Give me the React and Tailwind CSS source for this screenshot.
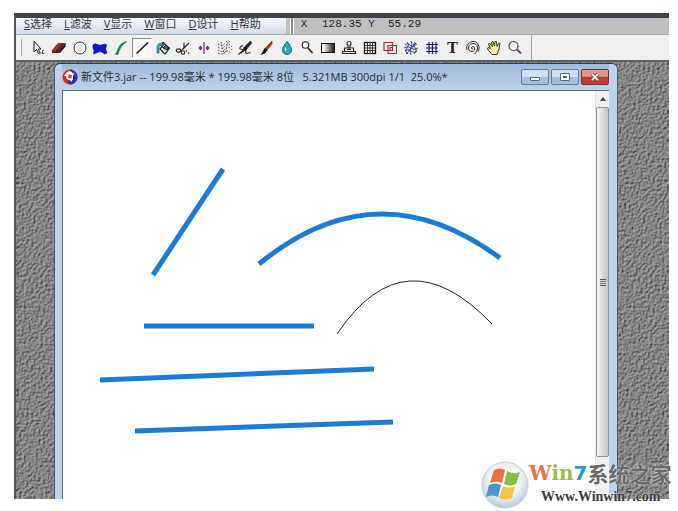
import React from "react";

const menus = [
  { key: "S", label: "选择" },
  { key: "L", label: "滤波" },
  { key: "V", label: "显示" },
  { key: "W", label: "窗口" },
  { key: "D", label: "设计" },
  { key: "H", label: "帮助" },
];

const tools = [
  {
    name: "Select",
    icon: (
      <>
        <path d="M4 1v11l2.500-2.500L8.500 13.500l1.500-.7-1.800-3.800H11z" fill="#fff" stroke="#222" />
        <path d="M9.500 13h2m1-2.500l1.500-.5m-1.500 .5v3h2" stroke="#222" fill="none" strokeWidth=".8" />
      </>
    ),
  },
  {
    name: "Eraser",
    icon: (
      <>
        <path d="M1 10.500L7 3.500h7.500L9 10.500z" fill="#a8301f" stroke="#4a1010" strokeWidth=".6" />
        <path d="M1 10.500h8V13H1z" fill="#6c2430" />
        <path d="M9 10.500l5.500-7v3L9 13z" fill="#141420" />
        <path d="M5 10.500L10.500 3.500h4L9 10.500V13H5z" fill="#2a1d38" opacity=".55" />
      </>
    ),
  },
  { name: "Circle", icon: <circle cx="8" cy="8" r="6" fill="none" stroke="#333" /> },
  { name: "Shape", icon: <path d="M1 5q2-2 4.500-.5T11 4.500L14 4l.5 2-1 2.500 1.500 4.500-2.500 1-2-1.500L8 11.500l-2.500 1L1.500 14l.5-3.500L1 8z" fill="#0b16c8" stroke="#0510a0" strokeWidth=".6" /> },
  { name: "Curve", icon: <path d="M13.500 1.500C9 2.500 6.500 5 5.500 8L2.500 14.500H5C6.500 9 8.500 5 13.500 2z" fill="#1d8a52" stroke="#1a7a48" strokeWidth=".6" /> },
  { name: "Line", active: true, icon: <path d="M2.500 13.500L14 2.500" stroke="#111" strokeWidth="1.500" /> },
  {
    name: "Fill",
    icon: (
      <>
        <path d="M5 9l4.500-5 5 4-4.500 6z" fill="#fff" stroke="#222" strokeWidth="1.200" />
        <path d="M8 8l3-3 3 3-2 2zM7 8V3q2-2 3 1" fill="#555" stroke="#222" />
        <path d="M2 13V6q1-3 5-3l2 1q-5 1-5 4v5z" fill="#2fb4bc" stroke="#134" strokeWidth=".5" />
      </>
    ),
  },
  {
    name: "Cut",
    icon: (
      <g fill="none" stroke="#222" strokeWidth="1.100">
        <path d="M9 2.500v5L6 11M14 3L8 9" />
        <ellipse cx="3.500" cy="10.500" rx="2.200" ry="1.600" />
        <ellipse cx="8" cy="12.500" rx="1.700" ry="1.800" />
        <path d="M11 10.500l1 1M13 12.500l1 1" />
      </g>
    ),
  },
  {
    name: "Mirror",
    icon: (
      <>
        <path d="M8 2v12" stroke="#333" />
        <path d="M4.500 5.500L6.500 8l-2 2.500L2.500 8zM11.500 5.500L13.500 8l-2 2.500L9.500 8z" fill="#8a1c90" />
      </>
    ),
  },
  {
    name: "Spray",
    icon: (
      <g fill="none" stroke="#333" strokeWidth=".9" strokeDasharray="1.500 1.500">
        <path d="M1 4q4 3 7-1t6 0M1 7q4 3 7-1t7 1M1 10q4 3 7-1t7 1M1 13q4 2 7-1t6 2M4 2l3 12M11 2L8 14" />
      </g>
    ),
  },
  {
    name: "Ink pen",
    icon: (
      <>
        <path d="M13.500 1L7 7.500l-1 3.500 3-1L14.500 3z" fill="#222" stroke="#222" strokeWidth=".8" />
        <path d="M6 5.500Q2 7 3 9q3 0 3 1.500L1.500 14.500M4 13q3-3 5-3-1 3.500 1 3.500l3.500-1" fill="none" stroke="#222" strokeWidth="1.100" />
      </>
    ),
  },
  {
    name: "Brush",
    icon: (
      <>
        <path d="M14 1L8 7.500l2 1.500L14 4z" fill="#b8400c" stroke="#7c2000" strokeWidth=".6" />
        <path d="M7 7.500l3 2-3 4-4.500 1.500L5 11z" fill="#261812" />
      </>
    ),
  },
  {
    name: "Water drop",
    icon: (
      <>
        <path d="M8 1.500Q12.500 7 12.500 10a4.500 4.500 0 0 1-9 0Q3.500 7 8 1.500z" fill="#28a8b8" stroke="#16626e" />
        <path d="M6.500 7Q5 9 6 11l2-1z" fill="#c4f4f8" />
      </>
    ),
  },
  {
    name: "Dodge",
    icon: (
      <>
        <circle cx="5.500" cy="5" r="3.300" fill="#fff" stroke="#222" strokeWidth="1.100" />
        <path d="M8 8l4.500 5" stroke="#222" strokeWidth="1.600" />
      </>
    ),
  },
  {
    name: "Gradient",
    icon: (
      <>
        <defs>
          <linearGradient id="toolGradient">
            <stop offset=".15" stopColor="#fff" />
            <stop offset="1" stopColor="#111" />
          </linearGradient>
        </defs>
        <rect x="1.500" y="3.500" width="13" height="9" fill="url(#toolGradient)" stroke="#111" />
      </>
    ),
  },
  {
    name: "Stamp",
    icon: (
      <g fill="#fff" stroke="#222" strokeWidth="1.100">
        <circle cx="8" cy="3.500" r="2" />
        <path d="M7 5.500v2.500H3.500v3.500h9V8H9V5.500M1.500 13.500v-2h13v2z" />
        <path d="M8 7v3M6 9.500h4" />
      </g>
    ),
  },
  {
    name: "Mesh",
    icon: (
      <>
        <rect x="2.500" y="2.500" width="11" height="11" fill="#fff" stroke="#111" strokeWidth="1.300" />
        <path d="M5.500 3v10M8 3v10M10.500 3v10M3 5.500h10M3 8h10M3 10.500h10" stroke="#222" strokeWidth=".9" />
      </>
    ),
  },
  {
    name: "Clone",
    icon: (
      <g fill="none" stroke="#b02838" strokeWidth="1.100">
        <path d="M2 2.500h8.500v8H2zM6 5.500h8.500v8H6z" />
        <path d="M8 7.500h2.500v3H8z" />
      </g>
    ),
  },
  {
    name: "Warp",
    icon: (
      <g fill="none" stroke="#2c3478" strokeWidth=".9">
        <path d="M2 5q3-3 5 0t7-1M1 8q4-3 7 0t7 0M2 11q3-3 6 0t6 0M4 2q3 3 0 6t1 6M8 1q2 3 0 7t0 7M12 2q-3 3 0 6t-1 6M3 14l10-11" />
      </g>
    ),
  },
  { name: "Grid", icon: <path d="M5 2v12M8.500 2v12M12 2v12M2 4.500h12M2 8h12M2 11.500h12" stroke="#1c2478" strokeWidth="1.200" /> },
  { name: "Text", letter: "T" },
  {
    name: "Spiral",
    icon: <path d="M8 9Q6 9 6.500 7.500 8 5.500 9.500 7.500 10.500 11 7 11.500 3 11 3.500 7 5 3 9 3.500 13 4.500 12.500 9 12 12 9.500 14M2 10Q.5 6 3.500 3.500 8-.5 12.500 3 15.500 7 13.500 11.500" fill="none" stroke="#333" />,
  },
  {
    name: "Hand",
    icon: <path d="M6 14.500L1.500 9 2 7.500l2.500 1L2.500 4l1-1 3 4L5.500 2l1.500-.5L8.500 6l.5-4.500h1.500l.5 5 2-3.500 1 .5-1 5.500-2 5.500z" fill="#fff3a6" stroke="#33301c" />,
  },
  {
    name: "Zoom",
    icon: (
      <>
        <circle cx="6.500" cy="6" r="4.500" fill="#f8fcff" stroke="#444" strokeWidth="1.200" />
        <path d="M10 9.500l4 4" stroke="#6c4878" strokeWidth="2" />
      </>
    ),
  },
];

function MenuBar() {
  return (
    <div className="flex h-4 shrink-0 bg-[#c0c0c0] text-[11px] leading-4 text-[#33353c]">
      <nav className="flex w-[270px] gap-3 bg-linear-to-b from-[#f4f6fc] to-[#d3dbee] pl-2">
        {menus.map((menu) => (
          <button key={menu.key} type="button" className="flex h-3 items-center whitespace-nowrap leading-3">
            <span className="underline">{menu.key}</span>
            {menu.label}
          </button>
        ))}
      </nav>
      <div className="ml-1 w-1 border-x border-x-white bg-[#8c8c8c]" />
      <div className="ml-1 flex h-3 items-center gap-3 font-['Liberation_Mono',monospace] leading-3 text-[#222]">
        <span className="w-3 text-center">X</span>
        <span className="whitespace-pre">128.35 Y  55.29</span>
      </div>
    </div>
  );
}

function ToolBar() {
  return (
    <div className="flex h-7 shrink-0 border-t border-b-2 border-t-[#a8a8a8] border-b-[#5c5f60] bg-[#f0f0f0]">
      <div className="my-1 ml-1 w-[2px] border-r border-[#a0a0a0] bg-white" />
      <div className="ml-[6px] grid w-[497px] shrink-0 grid-cols-24 items-center">
        {tools.map((tool) => (
          <button
            key={tool.name}
            type="button"
            aria-label={tool.name}
            className={
              tool.active
                ? "flex h-5 items-center justify-center border border-t-[#8a8a8a] border-r-white border-b-white border-l-[#8a8a8a] bg-[#f8f8f8]"
                : "flex h-5 items-center justify-center"
            }
          >
            {tool.letter ? (
              <span className="font-['DejaVu_Serif',serif] text-sm leading-5 font-bold text-[#222]">{tool.letter}</span>
            ) : (
              <svg viewBox="0 0 16 16" className="size-4 shrink-0">{tool.icon}</svg>
            )}
          </button>
        ))}
      </div>
      <div className="ml-[6px] w-px bg-[#a3a394]" />
    </div>
  );
}

function Texture() {
  return (
    <svg className="absolute inset-0 size-full" aria-hidden="true">
      <filter id="stone" x="0" y="0" width="100%" height="100%" colorInterpolationFilters="sRGB">
        <feTurbulence type="fractalNoise" baseFrequency="0.42" numOctaves="2" seed="4" />
        <feDiffuseLighting surfaceScale="1.5" diffuseConstant="1" lightingColor="#a6a6a6">
          <feDistantLight azimuth="225" elevation="54" />
        </feDiffuseLighting>
      </filter>
      <rect width="100%" height="100%" filter="url(#stone)" />
    </svg>
  );
}

function WindowButtons() {
  const base = "flex h-4 items-center justify-center rounded-xs border";
  return (
    <div className="flex gap-[2px]">
      <button type="button" aria-label="Minimize" className={`${base} w-7 border-[#5f7d9f] bg-linear-to-b from-[#cfe0f2] from-50% to-[#a2bfdf] to-50%`}>
        <span className="mt-1 h-1 w-[10px] rounded-[1px] border border-[#59657a] bg-white" />
      </button>
      <button type="button" aria-label="Restore" className={`${base} w-7 border-[#5f7d9f] bg-linear-to-b from-[#cfe0f2] from-50% to-[#a2bfdf] to-50%`}>
        <span className="flex h-2 w-[10px] items-center justify-center rounded-[1px] border border-[#59657a] bg-white">
          <span className="h-[2px] w-1 bg-[#59657a]" />
        </span>
      </button>
      <button type="button" aria-label="Close" className={`${base} w-7 border-[#70332e] bg-linear-to-b from-[#dd9a8c] from-45% to-[#bd3f2c] to-50%`}>
        <svg viewBox="0 0 10 8" className="h-2 w-[10px]">
          <path d="M2 1l6 6M8 1L2 7" stroke="#6b3a38" strokeWidth="3.500" />
          <path d="M2 1l6 6M8 1L2 7" stroke="#fff" strokeWidth="2" />
        </svg>
      </button>
    </div>
  );
}

function Drawing() {
  return (
    <svg viewBox="0 0 532 408" className="h-[408px] w-[532px] shrink-0" fill="none">
      <g stroke="#1c7bd2" strokeWidth="5">
        <path d="M90 184L160 78" />
        <path d="M196 173Q314 76 437 167" />
        <path d="M81 235H251" />
        <path d="M37 289L311 278" />
        <path d="M72 340L330 331" />
      </g>
      <path d="M274 243Q342 142 429 233" stroke="#222" />
    </svg>
  );
}

function ScrollBar() {
  return (
    <div className="flex w-[14px] shrink-0 flex-col border-l border-[#e2e2e2] bg-[#f0f0f0]">
      <button type="button" aria-label="Scroll up" className="flex h-4 items-center justify-center">
        <svg viewBox="0 0 6 4" className="h-1 w-[6px]">
          <path d="M0 4l3-4 3 4z" fill="#444" />
        </svg>
      </button>
      <div className="mb-[42px] flex flex-1 items-center justify-center rounded-xs border border-[#929292] bg-linear-to-r from-[#f5f5f5] to-[#c4c4c8]">
        <div className="flex flex-col gap-px">
          <span className="h-px w-[6px] bg-[#555]" />
          <span className="h-px w-[6px] bg-[#777]" />
          <span className="h-px w-[6px] bg-[#777]" />
          <span className="h-px w-[6px] bg-[#555]" />
        </div>
      </div>
    </div>
  );
}

function DocumentWindow() {
  return (
    <section className="relative mr-[52px] ml-[38px] flex flex-1 flex-col rounded-t-md border-x border-t border-x-[#3c5a70] border-t-[#2e3c46] bg-[#bcd3ea] pr-2 pl-[7px]">
      <header className="flex h-[26px] shrink-0 items-center justify-between bg-linear-to-b from-[#9fbbdb] to-[#bcd3ea]">
        <div className="flex items-center gap-[3px]">
          <svg viewBox="0 0 16 16" className="size-4">
            <circle cx="8" cy="8" r="7.500" fill="#d82828" />
            <path d="M8 .5a7.500 7.500 0 0 1 0 15Q5 14 6 12q6-1 5-6-1-3-3-5.500z" fill="#2334b4" />
            <path d="M5 3q3-2 6 1l2 1-2 1v4l-2 3-1-2q-4 0-4-4H2z" fill="#fff" />
            <path d="M6.500 5.500L10 6l-.5 3.500L6 9z" fill="#d93838" />
          </svg>
          <h1 className="text-[11px] leading-4 whitespace-pre text-[#252b33]">新文件3.jar -- 199.98毫米 * 199.98毫米 8位   5.321MB 300dpi 1/1  25.0%*</h1>
        </div>
        <WindowButtons />
      </header>
      <div className="flex min-h-0 flex-1 border-t border-l border-[#5d6c7a] bg-white">
        <div className="min-w-0 flex-1 overflow-hidden">
          <Drawing />
        </div>
        <ScrollBar />
      </div>
    </section>
  );
}

function Watermark() {
  return (
    <div className="absolute right-[5px] bottom-0 flex h-[50px] items-start">
      <svg viewBox="0 0 48 48" className="size-12">
        <defs>
          <radialGradient id="orb" cx=".5" cy=".4" r=".6">
            <stop offset="0" stopColor="#fff" />
            <stop offset=".6" stopColor="#edf2f6" />
            <stop offset="1" stopColor="#b9c8d4" />
          </radialGradient>
        </defs>
        <circle cx="24" cy="24" r="23" fill="url(#orb)" stroke="#c3ced8" />
        <path d="M13 9q6-3 11 0l-3 13q-6-3-12 0z" fill="#e8703c" />
        <path d="M26 10q6 4 13 1l-4 12q-6 3-12 0z" fill="#8cba45" />
        <path d="M8 24q6-3 12 0l-3 12q-6-3-12 0z" fill="#4b96d0" />
        <path d="M22 25q6 3 12 0l-3 12q-6 3-13 0z" fill="#f6c344" />
      </svg>
      <div className="flex w-[144px] flex-col [text-shadow:0_0_2px_#ffffff]">
        <div className="flex items-center font-['DejaVu_Serif',serif] text-xl leading-6 font-bold whitespace-nowrap">
          <span className="text-[#e4754a]">W</span>
          <span className="text-[#9fb94a]">in</span>
          <span className="font-['DejaVu_Sans',sans-serif] text-[#2f96cf]">7</span>
          <span className="font-['Noto_Sans_CJK_SC',sans-serif] text-[21px] text-[#686868]">系统之家</span>
        </div>
        <a href="#" className="pl-3 font-['Liberation_Serif',serif] text-sm leading-6 font-bold text-[#3c3c3c]">Www.Winwin7.com</a>
      </div>
    </div>
  );
}

export default function App() {
  return (
    <div className="relative flex h-screen flex-col bg-white pt-[13px] pr-[9px] pb-3 pl-[14px] font-['Open_Sans','Noto_Sans_CJK_SC',sans-serif]">
      <main className="flex min-h-0 flex-1 flex-col overflow-hidden border-t-[5px] border-l-2 border-t-[#3d444c] border-l-[#555]">
        <MenuBar />
        <ToolBar />
        <div className="relative flex min-h-0 flex-1 overflow-hidden bg-[#7c7c7c] pt-px">
          <Texture />
          <DocumentWindow />
        </div>
      </main>
      <Watermark />
    </div>
  );
}
